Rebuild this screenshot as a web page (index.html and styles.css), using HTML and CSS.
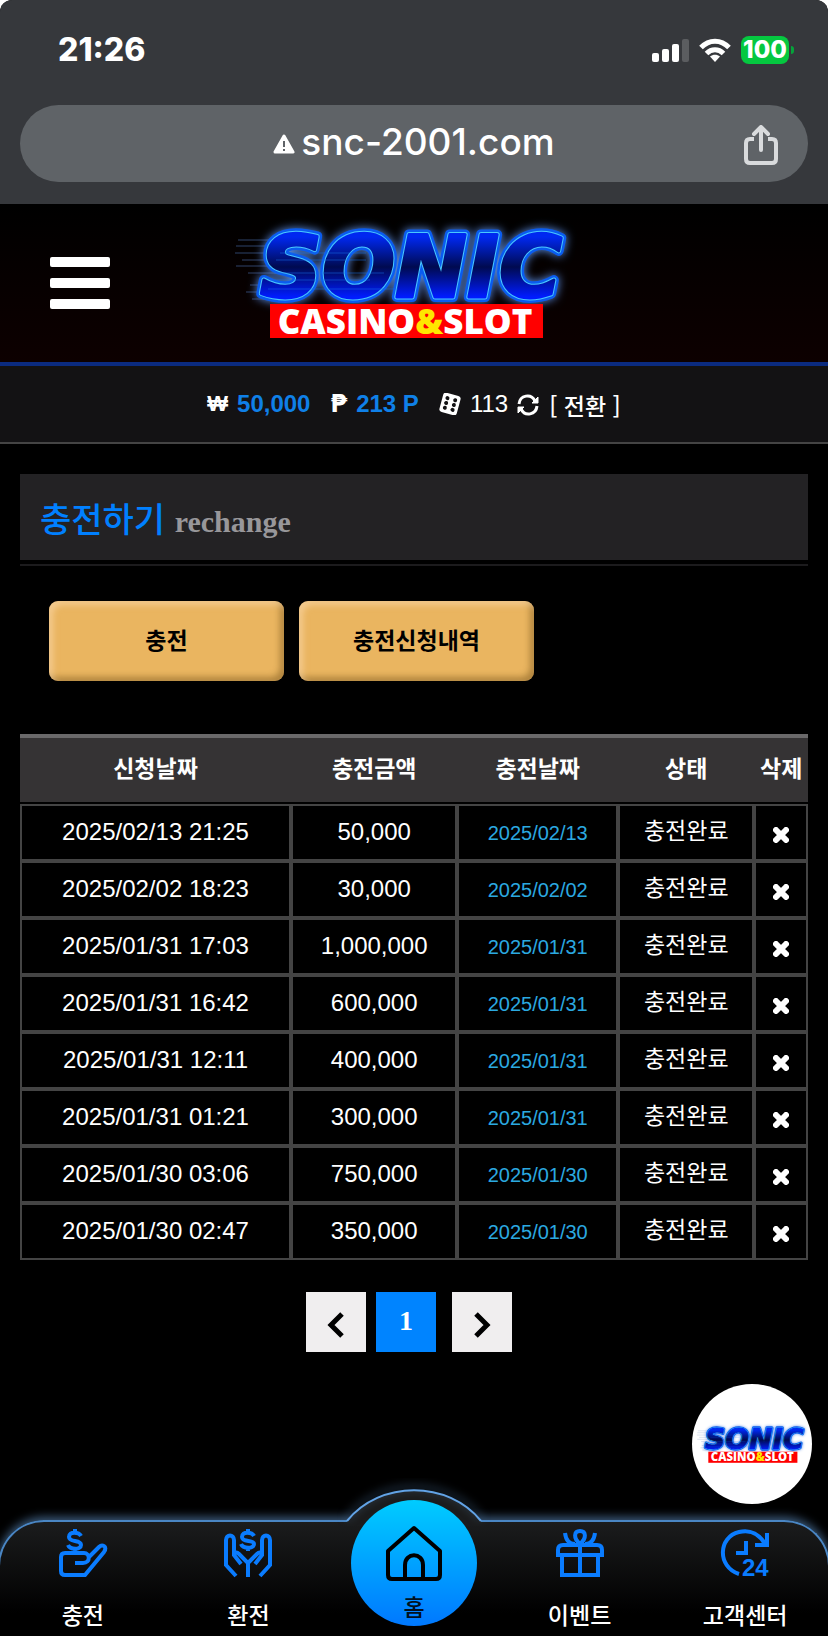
FILE: index.html
```
<!DOCTYPE html>
<html lang="ko">
<head>
  <meta charset="UTF-8" />
  <meta name="viewport" content="width=device-width, initial-scale=1.0"/>
  <title>SONIC CASINO&amp;SLOT - 충전하기</title>
  <link rel="stylesheet" href="styles.css">
</head>
<body>
  <div class="browser">
    <div class="status-bar">
      <span class="time">21:26</span>
      <div class="status-icons">
        <svg class="signal" viewBox="0 0 37 24" fill="#fff">
          <rect x="0" y="15" width="7" height="9" rx="2"/>
          <rect x="10" y="11" width="7" height="13" rx="2"/>
          <rect x="20" y="6" width="7" height="18" rx="2"/>
          <rect x="30" y="1" width="7" height="23" rx="2" fill="#5b5d60"/>
        </svg>
        <svg class="wifi" viewBox="0 0 32 24" fill="none" stroke="#fff" stroke-width="5">
          <path d="M2 9.500C10 1 22 1 30 9.500"/>
          <path d="M7.500 15.500C12.500 10.500 19.500 10.500 24.500 15.500"/>
          <path d="M16 24l-5-5.500c3-2.500 7-2.500 10 0z" fill="#fff" stroke="none"/>
        </svg>
        <div class="battery">100</div>
      </div>
    </div>
    <div class="url-bar">
      <div class="address">
        <svg class="warning" viewBox="0 0 22 20">
          <path d="M11 2L20 18H2z" fill="#fff" stroke="#fff" stroke-width="3" stroke-linejoin="round"/>
          <path d="M11 7v6M11 15v2" stroke="#5f6367" stroke-width="2"/>
        </svg>
        <span>snc-2001.com</span>
      </div>
      <button class="share" aria-label="공유">
        <svg viewBox="0 0 34 40" fill="none" stroke="#d9dbdd" stroke-width="4" stroke-linecap="round" stroke-linejoin="round">
          <path d="M10 14H6q-4 0-4 4v16q0 4 4 4h22q4 0 4-4V18q0-4-4-4h-4" stroke-linecap="butt"/>
          <path d="M17 25V3M10 9l7-7 7 7"/>
        </svg>
      </button>
    </div>
  </div>

  <header class="header">
    <button class="menu" aria-label="메뉴"><i></i><i></i><i></i></button>
    <a class="logo" href="#" aria-label="SONIC CASINO&amp;SLOT">
      <svg viewBox="0 0 380 150">
        <defs>
          <linearGradient id="blue" x1="0" y1="0" x2="0" y2="1">
            <stop offset=".2" stop-color="#0028f0"/>
            <stop offset=".5" stop-color="#000a50"/>
            <stop offset=".8" stop-color="#001cff"/>
          </linearGradient>
          <g id="logo">
            <path d="M18 30h50M16 36h50M15 43h50M22 50h40M16 56h40M28 63h30M30 75h20M26 82h24M32 89h24" stroke="#4c6fae" stroke-width="1" opacity=".6"/>
            <text class="logo-glow" x="40" y="87">SONIC</text>
            <text class="logo-edge" x="40" y="87">SONIC</text>
            <text class="logo-name" x="40" y="87">SONIC</text>
            <path d="M60 43h86M56 50h90M54 63h110M50 70h100M48 79h130" stroke="#1670e8" stroke-width="1" opacity=".5"/>
            <rect x="50" y="94" width="273" height="34" fill="#f00"/>
            <text class="logo-sub" x="185" y="124" text-anchor="middle">CASINO<tspan fill="#ffe600">&amp;</tspan>SLOT</text>
          </g>
        </defs>
        <use href="#logo"/>
      </svg>
    </a>
  </header>

  <div class="wallet">
    <span class="coin">₩</span>
    <b class="money">50,000</b>
    <span class="coin point">₱</span>
    <b class="money">213 P</b>
    <svg class="dice" viewBox="0 0 22 22">
      <g transform="rotate(15 11 11)">
        <rect x="2" y="1" width="18" height="20" rx="3" fill="#fff"/>
        <g fill="#131214">
          <circle cx="7" cy="6" r="2"/><circle cx="15" cy="6" r="2"/>
          <circle cx="7" cy="11" r="2"/><circle cx="15" cy="11" r="2"/>
          <circle cx="7" cy="16" r="2"/><circle cx="15" cy="16" r="2"/>
        </g>
      </g>
    </svg>
    <span class="count">113</span>
    <button class="convert">
      <svg viewBox="0 0 22 22" fill="none" stroke="#fff" stroke-width="3">
        <path d="M2 10C3 1 14 -1 18 7M20 12C19 21 8 23 4 15"/>
        <path d="M21 3v6h-6zM1 19v-6h6z" fill="#fff" stroke-width="1"/>
      </svg>
      [ 전환 ]
    </button>
  </div>

  <main class="content">
    <h1 class="title">충전하기 <small>rechange</small></h1>

    <div class="tabs">
      <button>충전</button>
      <button>충전신청내역</button>
    </div>

    <table class="history">
      <colgroup><col class="c-req"><col class="c-amount"><col class="c-date"><col class="c-state"><col class="c-del"></colgroup>
      <thead>
        <tr><th>신청날짜</th><th>충전금액</th><th>충전날짜</th><th>상태</th><th>삭제</th></tr>
      </thead>
      <tbody>
        <tr><td>2025/02/13 21:25</td><td>50,000</td><td class="date">2025/02/13</td><td class="state">충전완료</td><td><button class="del" aria-label="삭제"><svg viewBox="0 0 16 16"><path d="M3 3l10 10M13 3L3 13"/></svg></button></td></tr>
        <tr><td>2025/02/02 18:23</td><td>30,000</td><td class="date">2025/02/02</td><td class="state">충전완료</td><td><button class="del" aria-label="삭제"><svg viewBox="0 0 16 16"><path d="M3 3l10 10M13 3L3 13"/></svg></button></td></tr>
        <tr><td>2025/01/31 17:03</td><td>1,000,000</td><td class="date">2025/01/31</td><td class="state">충전완료</td><td><button class="del" aria-label="삭제"><svg viewBox="0 0 16 16"><path d="M3 3l10 10M13 3L3 13"/></svg></button></td></tr>
        <tr><td>2025/01/31 16:42</td><td>600,000</td><td class="date">2025/01/31</td><td class="state">충전완료</td><td><button class="del" aria-label="삭제"><svg viewBox="0 0 16 16"><path d="M3 3l10 10M13 3L3 13"/></svg></button></td></tr>
        <tr><td>2025/01/31 12:11</td><td>400,000</td><td class="date">2025/01/31</td><td class="state">충전완료</td><td><button class="del" aria-label="삭제"><svg viewBox="0 0 16 16"><path d="M3 3l10 10M13 3L3 13"/></svg></button></td></tr>
        <tr><td>2025/01/31 01:21</td><td>300,000</td><td class="date">2025/01/31</td><td class="state">충전완료</td><td><button class="del" aria-label="삭제"><svg viewBox="0 0 16 16"><path d="M3 3l10 10M13 3L3 13"/></svg></button></td></tr>
        <tr><td>2025/01/30 03:06</td><td>750,000</td><td class="date">2025/01/30</td><td class="state">충전완료</td><td><button class="del" aria-label="삭제"><svg viewBox="0 0 16 16"><path d="M3 3l10 10M13 3L3 13"/></svg></button></td></tr>
        <tr><td>2025/01/30 02:47</td><td>350,000</td><td class="date">2025/01/30</td><td class="state">충전완료</td><td><button class="del" aria-label="삭제"><svg viewBox="0 0 16 16"><path d="M3 3l10 10M13 3L3 13"/></svg></button></td></tr>
      </tbody>
    </table>

    <nav class="pagination">
      <a href="#" aria-label="이전"><svg viewBox="0 0 16 26"><path d="M14 2L3 13l11 11"/></svg></a>
      <a href="#" class="active">1</a>
      <a href="#" class="next" aria-label="다음"><svg viewBox="0 0 16 26"><path d="M2 2l11 11L2 24"/></svg></a>
    </nav>
  </main>

  <nav class="bottom-nav">
    <a class="float-logo" href="#" aria-label="SONIC CASINO&amp;SLOT">
      <svg viewBox="0 0 380 150"><use href="#logo"/></svg>
    </a>
    <svg class="bump" viewBox="0 0 160 48">
      <path class="bump-fill" d="M13 48V43C46 2 114 2 147 43V48z"/>
      <path class="bump-line" d="M13 43C46 2 114 2 147 43"/>
    </svg>
    <a class="item" href="#">
      <svg viewBox="0 0 48 48">
        <path d="M22 7C20 3 10 2 10 8c0 6 12 2 12 8 0 5-11 5-13 0M16 0v4M16 19v4"/>
        <path d="M16 34h8c8 0 7-10 1-10H6q-4 0-4 4v14q0 4 4 4h20l19-23c4-6-2-8-5-5l-10 10"/>
      </svg>
      <span>충전</span>
    </a>
    <a class="item" href="#">
      <svg viewBox="0 0 48 48">
        <path d="M30 7C28 3 18 2 18 8c0 6 12 2 12 7 0 5-11 5-13 0M24 0v4M24 18v4"/>
        <path d="M12 47L2 36V11c0-6 8-6 8 0v15l7 9M36 47l10-11V11c0-6-8-6-8 0v15l-7 9M24 48V34l-9-9c-3-3-5-1-5 2M24 34l9-9c3-3 5-1 5 2"/>
      </svg>
      <span>환전</span>
    </a>
    <a class="item home" href="#">
      <svg viewBox="0 0 56 56">
        <path d="M28 3L54 26v24q0 4-4 4H6q-4 0-4-4V26z"/>
        <path d="M19 54V40c0-13 18-13 18 0v14"/>
      </svg>
      <span>홈</span>
    </a>
    <a class="item" href="#">
      <svg viewBox="0 0 48 48">
        <path d="M2 26v-5q0-5 5-5h34q5 0 5 5v5zM6 26v20h36V26M24 16v30"/>
        <path d="M24 15c-7-6-6-13 0-13s7 7 0 13M9 4c1 8 5 11 10 11M39 4c-1 8-5 11-10 11"/>
      </svg>
      <span>이벤트</span>
    </a>
    <a class="item" href="#">
      <svg viewBox="0 0 48 48">
        <path d="M18 45C-4 38-3 8 18 3c12-3 21 3 26 12M46 4v12H34M25 12v12H15"/>
        <text class="hours" x="21" y="47">24</text>
      </svg>
      <span>고객센터</span>
    </a>
  </nav>
</body>
</html>
```
FILE: styles.css
```
* {
  box-sizing: border-box;
}
html {
  background: #fff;
}
body {
  margin: 0;
  min-height: 100vh;
  display: flex;
  flex-direction: column;
  background: #000;
  border-radius: 12px 12px 0 0;
  overflow: hidden;
  color: #fff;
  font-family: "Liberation Sans", "Noto Sans CJK KR", sans-serif;
  font-size: 24px;
}
a {
  color: inherit;
  text-decoration: none;
}
button {
  padding: 0;
  border: none;
  background: none;
  color: inherit;
  font: inherit;
  cursor: pointer;
}
svg {
  display: block;
}

/* browser bar */
.browser {
  height: 204px;
  padding: 0 20px;
  background: #36383c;
}
.status-bar {
  height: 105px;
  padding: 0 14px 6px 38px;
  display: flex;
  align-items: center;
  justify-content: space-between;
  font-family: Inter, sans-serif;
  font-weight: 800;
}
.time {
  font-size: 32px;
}
.status-icons {
  display: flex;
  align-items: center;
  gap: 10px;
}
.signal {
  width: 37px;
  height: 24px;
}
.wifi {
  width: 32px;
  height: 24px;
}
.battery {
  position: relative;
  width: 48px;
  margin-right: 5px;
  border-radius: 8px;
  background: #05c840;
  font-size: 24px;
  line-height: 28px;
  text-align: center;
}
.battery::after {
  content: "";
  position: absolute;
  right: -5px;
  top: 10px;
  width: 3px;
  height: 8px;
  border-radius: 0 3px 3px 0;
  background: #05a33a;
}
.url-bar {
  position: relative;
  height: 77px;
  display: flex;
  align-items: center;
  justify-content: center;
  border-radius: 39px;
  background: #5f6367;
}
.address {
  display: flex;
  align-items: center;
  gap: 6px;
  font-family: Inter, sans-serif;
  font-size: 37px;
  font-weight: 500;
  line-height: 46px;
  padding-bottom: 4px;
}
.warning {
  width: 22px;
  height: 20px;
  margin-top: 4px;
}
.share {
  position: absolute;
  right: 30px;
  top: 20px;
}
.share svg {
  width: 34px;
  height: 40px;
}

/* site header */
.header {
  position: relative;
  height: 162px;
  padding-top: 4px;
  display: flex;
  align-items: center;
  justify-content: center;
  background: linear-gradient(#000, #0d0000);
  border-bottom: 4px solid #0b2b80;
}
.menu {
  position: absolute;
  left: 50px;
  top: 53px;
  width: 60px;
  display: flex;
  flex-direction: column;
  gap: 11px;
}
.menu i {
  height: 10px;
  border-radius: 2px;
  background: #fff;
}
.logo svg {
  width: 380px;
  height: 150px;
}
.logo {
  margin-right: 8px;
}
.logo-name,
.logo-edge,
.logo-glow {
  font-family: "DejaVu Sans", sans-serif;
  font-size: 86px;
  font-weight: 700;
  font-style: italic;
  stroke-linejoin: round;
}
.logo-name {
  fill: url(#blue);
  stroke: url(#blue);
  stroke-width: 3px;
}
.logo-edge {
  fill: #48c8ff;
  stroke: #48c8ff;
  stroke-width: 5px;
}
.logo-glow {
  fill: #005cff;
  stroke: #0a5cf0;
  stroke-width: 10px;
  filter: drop-shadow(0 0 5px #5b8fe8);
}
.logo-sub {
  font-family: "Open Sans", sans-serif;
  font-size: 35px;
  font-weight: 800;
  fill: #fff;
}

/* wallet line */
.wallet {
  height: 78px;
  display: flex;
  align-items: center;
  justify-content: center;
  gap: 9px;
  background: #131214;
  border-bottom: 2px solid #444;
}
.coin {
  font-size: 22px;
  font-weight: 700;
}
.point {
  margin-left: 11px;
  font-family: "DejaVu Sans", sans-serif;
  font-size: 24px;
}
.money {
  color: #0f80e8;
}
.dice {
  width: 22px;
  height: 22px;
  margin-left: 11px;
}
.convert {
  display: flex;
  align-items: center;
  gap: 10px;
  padding-top: 2px;
  font-family: "Noto Sans CJK KR", sans-serif;
  font-size: 23px;
  font-weight: 500;
}
.convert svg {
  width: 22px;
  height: 22px;
}

/* content */
.content {
  padding: 30px 20px;
}
.title {
  margin: 0;
  height: 86px;
  padding: 0 20px;
  background: #232224;
  color: #0080ff;
  font-family: "Noto Sans CJK KR", sans-serif;
  font-size: 34px;
  font-weight: 500;
  line-height: 88px;
  box-shadow: 0 4px #000, 0 6px #1c1b1d;
}
.title small {
  color: #98979a;
  font-family: "Liberation Serif", serif;
  font-size: 30px;
  font-weight: 700;
}
.tabs {
  display: flex;
  gap: 15px;
  margin: 41px 29px 53px;
}
.tabs button {
  width: 235px;
  height: 80px;
  padding-bottom: 4px;
  border-radius: 9px;
  background: #eab560;
  box-shadow: inset 4px 4px 6px rgba(255, 225, 190, .5), inset -4px -4px 6px rgba(90, 60, 10, .4);
  color: #000;
  font-family: "Noto Sans CJK KR", sans-serif;
  font-size: 23px;
  font-weight: 700;
}
.history {
  width: 100%;
  table-layout: fixed;
  border-collapse: separate;
  border-spacing: 0;
  text-align: center;
}
.c-req {
  width: 34.4%;
}
.c-amount {
  width: 21.1%;
}
.c-date {
  width: 20.4%;
}
.c-state {
  width: 17.3%;
}
.c-del {
  width: 6.8%;
}
.history th {
  height: 70px;
  padding: 0 0 6px;
  border-top: 4px solid #6a696a;
  border-bottom: 2px solid #000;
  background: #353334;
  background-clip: padding-box;
  font-size: 23px;
  font-weight: 700;
}
.history td {
  height: 57px;
  padding: 0 0 2px;
  border: 2px solid #444;
  line-height: 30px;
  white-space: nowrap;
}
.history .date {
  padding: 0;
  color: #2ba9e0;
  font-size: 20px;
}
.history .state {
  padding-bottom: 4px;
  font-size: 23px;
}
.del svg {
  width: 16px;
  height: 16px;
  stroke: #fff;
  stroke-width: 6;
  stroke-linecap: round;
}
.del {
  display: block;
  margin: 6px auto 0;
}
.pagination {
  display: flex;
  justify-content: center;
  gap: 10px;
  margin-top: 32px;
  padding-right: 10px;
}
.pagination a {
  width: 60px;
  height: 60px;
  display: flex;
  align-items: center;
  justify-content: center;
  background: #f0eeef;
  font-family: "Liberation Serif", serif;
  font-size: 28px;
  font-weight: 700;
}
.pagination .active {
  padding-bottom: 2px;
  background: #0084ff;
}
.pagination .next {
  margin-left: 6px;
}
.pagination svg {
  width: 16px;
  height: 26px;
  margin-top: 6px;
  overflow: visible;
  fill: none;
  stroke: #000;
  stroke-width: 5;
}

/* bottom navigation */
.bottom-nav {
  position: relative;
  height: 116px;
  margin: auto -2px 0;
  display: flex;
  border: 2px solid #4a86c4;
  border-bottom: none;
  border-radius: 46px 46px 0 0;
  background: linear-gradient(#1b1c1d, #000 80%);
  box-shadow: 0 -3px 10px rgba(110, 165, 225, .55);
}
.float-logo {
  position: absolute;
  right: 16px;
  bottom: 132px;
  width: 120px;
  height: 120px;
  padding-top: 37px;
  border-radius: 50%;
  background: #fff;
}
.float-logo svg {
  width: 124px;
  height: 49px;
}
.bump {
  position: absolute;
  left: 50%;
  top: -44px;
  width: 160px;
  height: 48px;
  transform: translateX(-50%);
}
.bump-fill {
  fill: #1b1c1d;
}
.bump-line {
  fill: none;
  stroke: #62a3e6;
  stroke-width: 2;
  filter: drop-shadow(0 -3px 5px rgba(110, 165, 225, .7));
}
.item {
  position: relative;
  flex: 1;
  display: flex;
  flex-direction: column;
  align-items: center;
  padding-top: 7px;
  font-family: "Noto Sans CJK KR", sans-serif;
  font-size: 23px;
  font-weight: 500;
}
.item svg {
  width: 48px;
  height: 48px;
  overflow: visible;
  fill: none;
  stroke: #0a7cff;
  stroke-width: 4;
}
.item span {
  margin-top: 22px;
  line-height: 30px;
}
.hours {
  fill: #0a7cff;
  stroke: none;
  font-family: "Liberation Sans", sans-serif;
  font-size: 24px;
  font-weight: 700;
}
.home {
  color: #001020;
}
.home::before {
  content: "";
  position: absolute;
  top: -22px;
  width: 126px;
  height: 126px;
  border-radius: 50%;
  background: linear-gradient(#00ccff, #0078ff);
}
.home svg {
  position: relative;
  width: 56px;
  height: 56px;
  margin-top: -4px;
  stroke: #000;
  stroke-linejoin: round;
}
.home span {
  position: relative;
  margin-top: 10px;
}
```
